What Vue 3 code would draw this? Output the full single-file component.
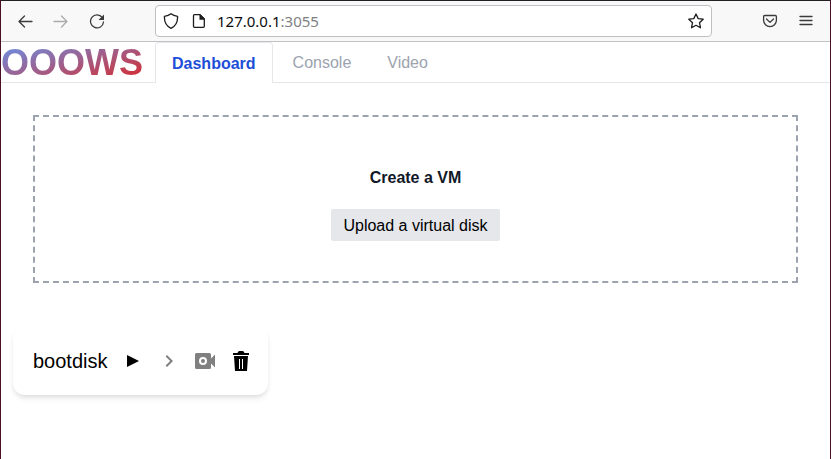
<script setup>
import { ref } from 'vue'

const tabs = ['Dashboard', 'Console', 'Video']
const active = ref('Dashboard')
const machines = ref([{ name: 'bootdisk' }])
</script>

<template>
  <div class="window">
    <header class="toolbar">
      <div class="history">
        <button class="tool" aria-label="Back">
          <svg viewBox="0 0 16 16"><path d="M15 8.5H2M7.5 3L2 8.5L7.5 14" /></svg>
        </button>
        <button class="tool faded" aria-label="Forward">
          <svg viewBox="0 0 16 16"><path d="M1 8.5H14M8.5 3L14 8.5L8.5 14" /></svg>
        </button>
        <button class="tool" aria-label="Reload">
          <svg viewBox="0 0 16 16"><path d="M13.3 4.6A6.5 6.5 0 1 0 14.5 9" /><path class="solid" d="M15 1.5V7H9.5z" /></svg>
        </button>
      </div>
      <div class="address">
        <div class="site">
          <svg class="glyph" viewBox="0 0 16 16"><path d="M8 .8C6.3 2.3 4 3.1 1.4 3.3C1.2 9 2.8 13 8 15.3C13.2 13 14.8 9 14.6 3.3C12 3.1 9.7 2.3 8 .8z" /></svg>
          <svg class="glyph" viewBox="0 0 16 16"><path d="M3.5 1.7H9L13.3 6V13.3Q13.3 14.3 12.3 14.3H3.5Q2.5 14.3 2.5 13.3V2.7Q2.5 1.7 3.5 1.7z" /><path class="solid" d="M8.5 1.5H9.5L13.5 5.5V6.8H8.5z" /></svg>
        </div>
        <span class="url">127.0.0.1<span class="port">:3055</span></span>
        <button class="tool star" aria-label="Bookmark this page">
          <svg viewBox="0 0 16 16"><path d="M8 1L10.2 5.6L15.2 6.2L11.5 9.7L12.5 14.8L8 12.3L3.5 14.8L4.5 9.7L.8 6.2L5.8 5.6z" /></svg>
        </button>
      </div>
      <div class="extras">
        <button class="tool" aria-label="Save to Pocket">
          <svg viewBox="0 0 16 16"><path d="M2.7 2.5H13.3Q14.4 2.5 14.4 3.6V7.2A6.4 6.4 0 0 1 1.6 7.2V3.6Q1.6 2.5 2.7 2.5zM4.5 6L8 9.4L11.5 6" /></svg>
        </button>
        <button class="tool" aria-label="Open menu">
          <svg viewBox="0 0 16 16"><path d="M2 3.5H14M2 7.5H14M2 11.5H14" /></svg>
        </button>
      </div>
    </header>

    <nav class="nav">
      <span class="logo">OOOWS</span>
      <a
        v-for="tab in tabs"
        :key="tab"
        href="#"
        class="tab"
        :class="{ active: tab === active }"
        @click.prevent="active = tab"
      >{{ tab }}</a>
    </nav>

    <main>
      <section class="drop">
        <p class="title">Create a VM</p>
        <button class="upload">Upload a virtual disk</button>
      </section>

      <div class="machines">
        <article v-for="vm in machines" :key="vm.name" class="card">
          <span class="name">{{ vm.name }}</span>
          <div class="actions">
            <button class="action" aria-label="Start">
              <svg viewBox="0 0 24 24"><path d="M6 6L18 12L6 18z" /></svg>
            </button>
            <button class="action muted" aria-label="Open console">
              <svg viewBox="0 0 24 24"><path d="M10 6L8.59 7.41L13.17 12L8.59 16.59L10 18L16 12z" /></svg>
            </button>
            <button class="action muted" aria-label="Record video">
              <svg viewBox="0 0 24 24"><path fill-rule="evenodd" d="M3.5 4H16.5Q18 4 18 5.5V9.5L22 5.5V18.5L18 14.5V18.5Q18 20 16.5 20H3.5Q2 20 2 18.5V5.5Q2 4 3.5 4zM10 8A4 4 0 1 0 10 16A4 4 0 1 0 10 8zM10 10A2 2 0 1 1 10 14A2 2 0 1 1 10 10z" /></svg>
            </button>
            <button class="action" aria-label="Delete">
              <svg viewBox="0 0 24 24"><path fill-rule="evenodd" d="M4 4H8.5Q9 2 10.5 2H13.5Q15 2 15.5 4H20V6H4zM5 7H19L18 22H6zM10 10V20H11V10zM13 10V20H14V10z" /></svg>
            </button>
          </div>
        </article>
      </div>
    </main>
  </div>
</template>

<style>
body {
  margin: 0;
  background: #fff;
}
</style>

<style scoped>
* {
  box-sizing: border-box;
}
.window {
  min-height: 100vh;
  border: 1px solid #4a0f25;
  border-top-color: #241f24;
  border-bottom: 0;
  background: #fff;
  font: 16px/24px "Liberation Sans", Arial, sans-serif;
  color: #000;
}
button {
  border: 0;
  padding: 0;
  background: none;
  font: inherit;
  color: inherit;
}
.toolbar {
  display: grid;
  grid-template-columns: 142px 1fr 106px;
  gap: 12px;
  align-items: center;
  height: 41px;
  border-bottom: 1px solid #c2c2c4;
  background: #f8f8f8;
}
.history,
.extras {
  display: flex;
  gap: 20px;
  padding-left: 16px;
}
.extras {
  justify-content: flex-end;
  padding: 0 16px 0 0;
}
.tool,
.glyph {
  flex: none;
  width: 16px;
  height: 16px;
}
.tool svg {
  display: block;
}
.tool path,
.glyph path {
  fill: none;
  stroke: #3b3b3e;
  stroke-width: 1.3;
  stroke-linejoin: round;
  stroke-linecap: round;
}
.glyph path,
.star path {
  stroke: #1c1c1e;
}
.tool .solid {
  fill: #3b3b3e;
  stroke: none;
}
.glyph .solid {
  fill: #1c1c1e;
  stroke: none;
}
.faded {
  opacity: 0.4;
}
.address {
  display: flex;
  align-items: center;
  gap: 10px;
  height: 32px;
  padding: 0 7px;
  border: 1px solid #c0c0c2;
  border-radius: 4px;
  background: #fff;
}
.site {
  display: flex;
  gap: 12px;
}
.url {
  flex: 1;
  font: 15px/20px "Noto Sans", sans-serif;
  color: #0c0c0d;
}
.port {
  color: #808082;
}
.nav {
  display: flex;
  border-bottom: 1px solid #e5e7eb;
}
.logo {
  margin-right: 12px;
  padding-top: 2px;
  font-size: 36px;
  line-height: 38px;
  font-weight: 700;
  color: transparent;
  background: linear-gradient(to bottom right, #6495ed, #dc2626);
  background-clip: text;
}
.tab {
  margin-right: 4px;
  padding: 9px 16px 7px;
  color: #9ca3af;
  text-decoration: none;
}
.active {
  margin-bottom: -1px;
  border: 1px solid #e5e7eb;
  border-bottom: 0;
  border-radius: 4px 4px 0 0;
  background: #fff;
  color: #1d4ed8;
  font-weight: 700;
}
.drop {
  display: flex;
  flex-direction: column;
  align-items: center;
  gap: 19px;
  margin: 32px;
  padding: 49px 16px 40px;
  border: 2px dashed #9ca3af;
}
.title {
  margin: 0;
  font-weight: 700;
  color: #111827;
}
.upload {
  padding: 5px 12px 3px;
  border-radius: 2px;
  background: #e5e7eb;
}
.machines {
  display: flex;
  flex-wrap: wrap;
  gap: 12px;
  padding: 12px;
}
.card {
  display: flex;
  align-items: center;
  gap: 13px;
  padding: 20px 15px 20px 20px;
  border-radius: 12px;
  background: #fff;
  box-shadow: 0 4px 6px -1px rgba(0, 0, 0, 0.1), 0 2px 4px -1px rgba(0, 0, 0, 0.06);
}
.name {
  font-size: 20px;
  line-height: 28px;
}
.actions {
  display: flex;
  gap: 12px;
}
.action {
  width: 24px;
  height: 24px;
}
.action svg {
  display: block;
  fill: #000;
}
.muted svg {
  fill: #808080;
}
</style>
